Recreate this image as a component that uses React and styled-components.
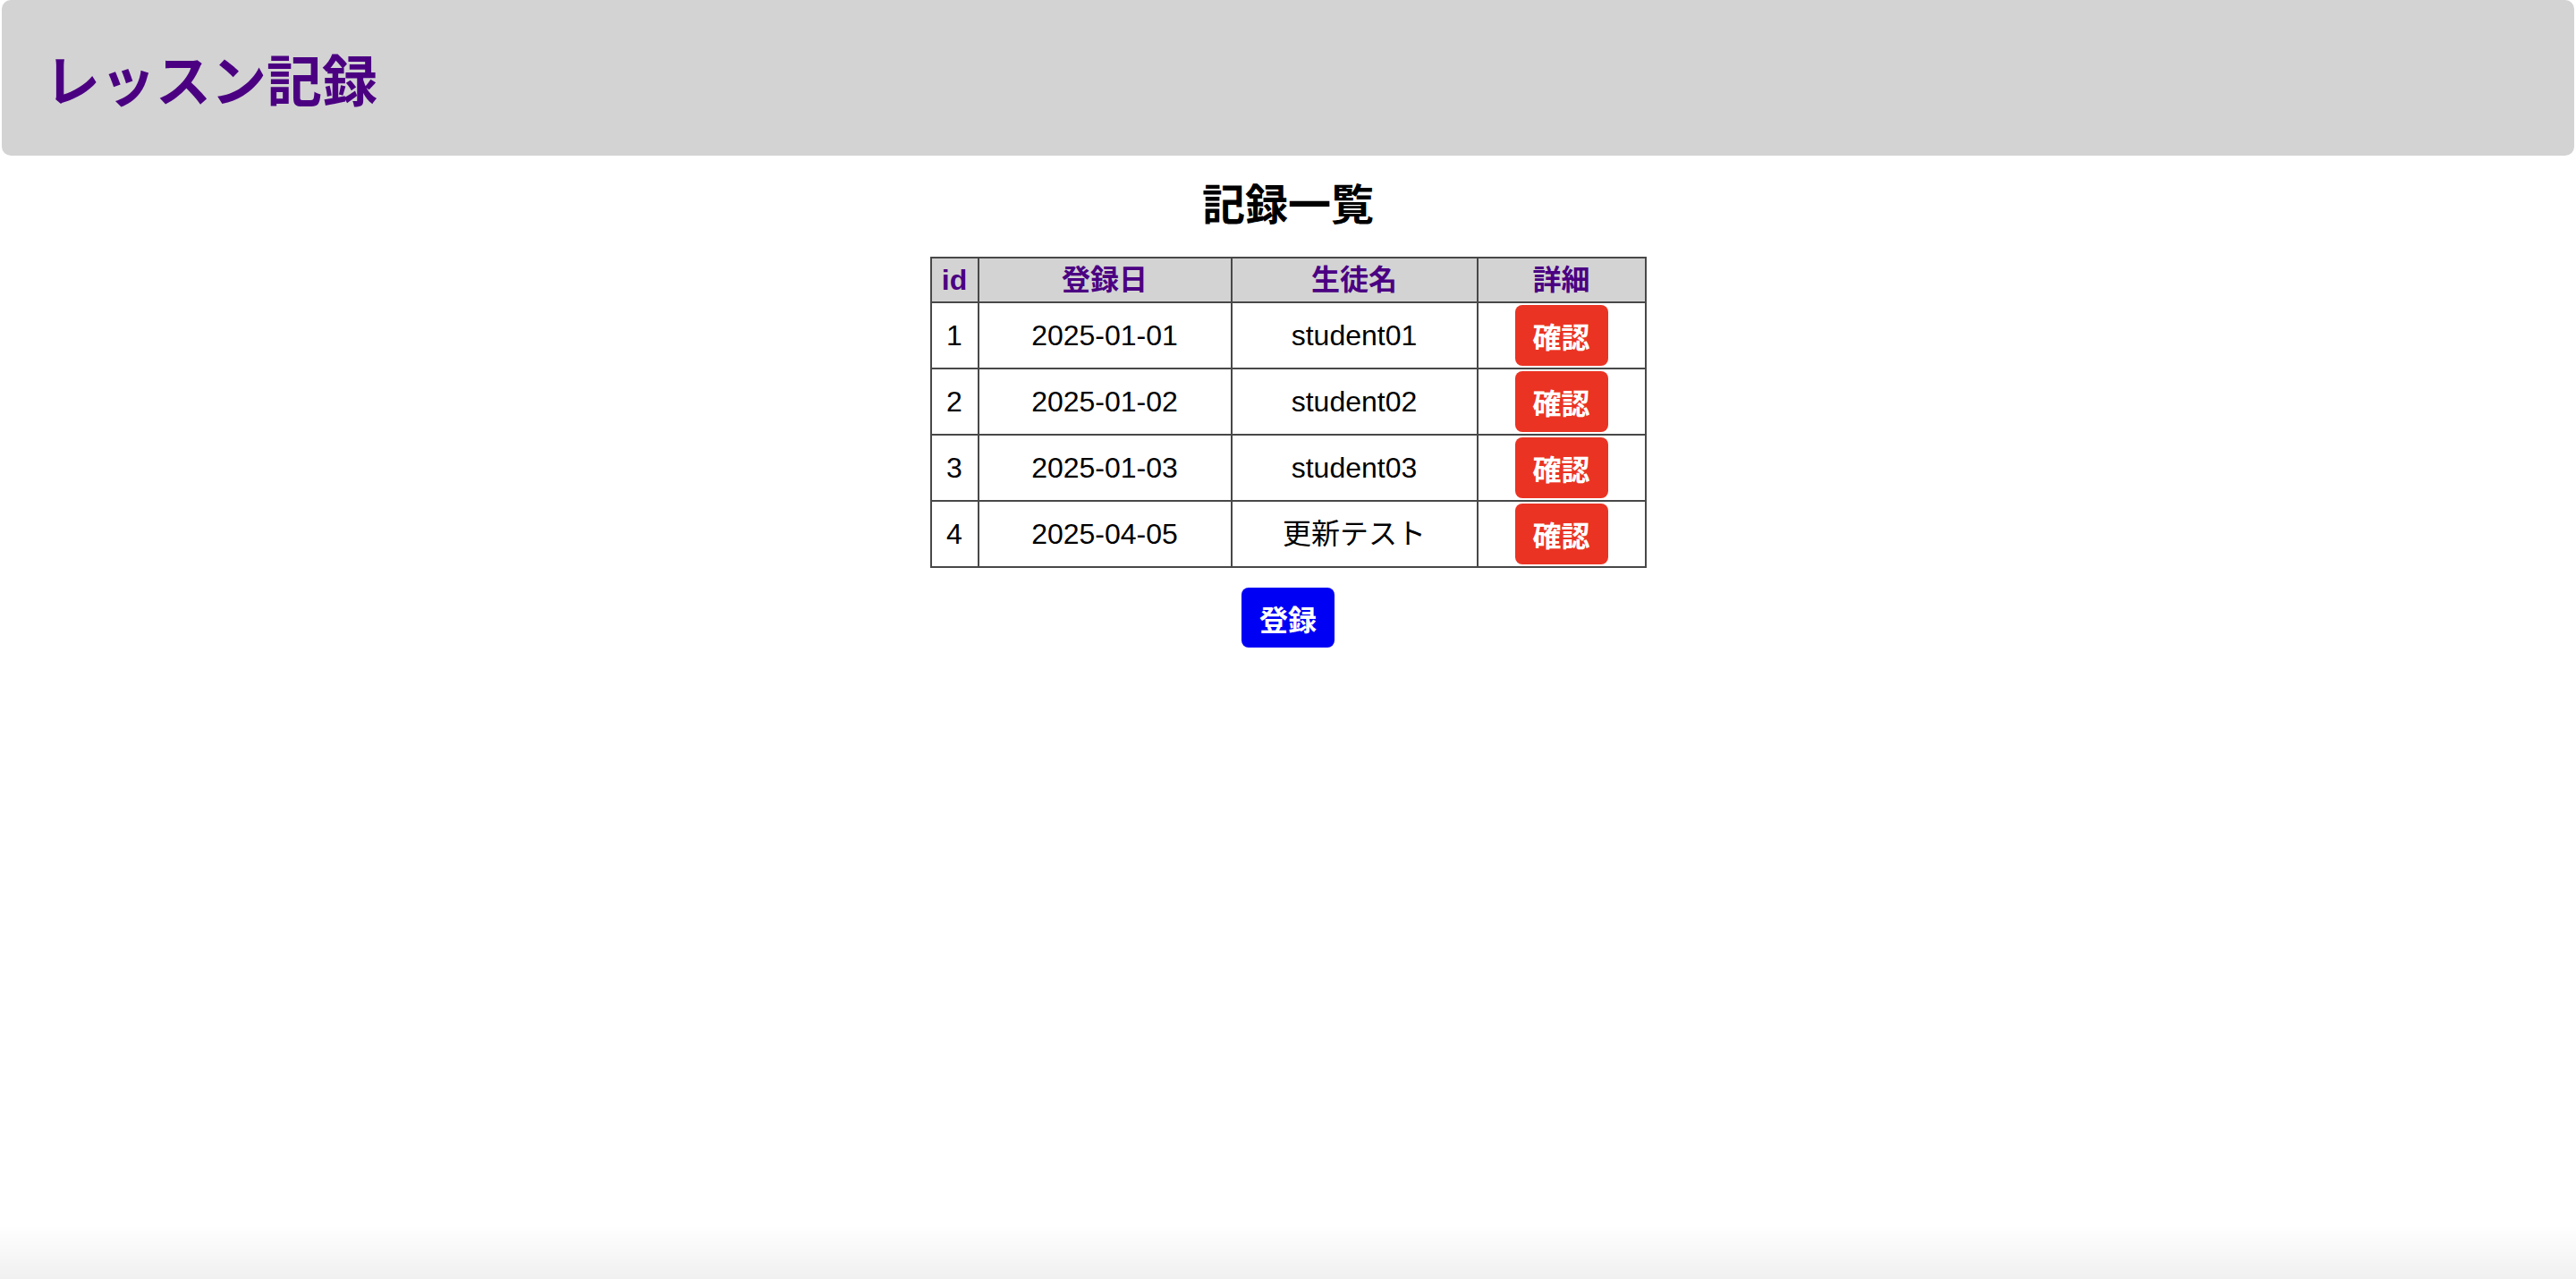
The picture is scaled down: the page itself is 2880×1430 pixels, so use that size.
import React from "react";
import styled, { createGlobalStyle } from "styled-components";

const records = [
  { id: 1, date: "2025-01-01", name: "student01" },
  { id: 2, date: "2025-01-02", name: "student02" },
  { id: 3, date: "2025-01-03", name: "student03" },
  { id: 4, date: "2025-04-05", name: "更新テスト" },
];

function App() {
  return (
    <>
      <GlobalStyle />
      <Header>
        <Title>レッスン記録</Title>
      </Header>
      <Main>
        <Heading>記録一覧</Heading>
        <Table>
          <colgroup>
            <Col width="53px" />
            <Col width="283px" />
            <Col width="275px" />
            <Col width="188px" />
          </colgroup>
          <thead>
            <tr>
              <Th>id</Th>
              <Th>登録日</Th>
              <Th>生徒名</Th>
              <Th>詳細</Th>
            </tr>
          </thead>
          <tbody>
            {records.map((r) => (
              <tr key={r.id}>
                <Td>{r.id}</Td>
                <Td>{r.date}</Td>
                <Td>{r.name}</Td>
                <Td>
                  <Button color="#ea3323" height="68px">
                    確認
                  </Button>
                </Td>
              </tr>
            ))}
          </tbody>
        </Table>
        <Button color="#0000f5" height="67px" top="22px">
          登録
        </Button>
      </Main>
      <BottomShade />
    </>
  );
}

export default App;

const GlobalStyle = createGlobalStyle`
  html, body {
    margin: 0;
    background: #ffffff;
  }
  body {
    font-family: "Liberation Sans", "Noto Sans CJK JP", sans-serif;
    min-height: 1430px;
  }
`;

const Header = styled.header`
  height: 174px;
  margin: 0 2px;
  background-color: #d3d3d3;
  border-radius: 10px;
  display: flex;
  align-items: center;
  padding-left: 48px;
  box-sizing: border-box;
`;

const Title = styled.h1`
  margin: 0;
  font-size: 62px;
  font-weight: 700;
  color: #4b0082;
`;

const Main = styled.main`
  display: flex;
  flex-direction: column;
  align-items: center;
  padding-top: 27px;
`;

const Heading = styled.h2`
  margin: 0 0 28px;
  font-size: 48px;
  line-height: 58px;
  font-weight: 700;
  color: #000;
`;

const Table = styled.table`
  width: 799px;
  border-collapse: collapse;
  table-layout: fixed;
  border: 2px solid #484848;
  font-size: 32px;
  color: #000;
`;

const Col = styled.col`
  width: ${(p) => p.width};
`;

const Th = styled.th`
  border: 2px solid #484848;
  background-color: #d3d3d3;
  color: #4b0082;
  font-weight: 700;
  padding: 2px 0;
  line-height: 44px;
  text-align: center;
`;

const Td = styled.td`
  border: 2px solid #484848;
  padding: 2px 0;
  text-align: center;
  vertical-align: middle;
  line-height: 40px;
`;

const Button = styled.button`
  display: inline-flex;
  align-items: center;
  justify-content: center;
  width: 104px;
  height: ${(p) => p.height};
  margin-top: ${(p) => p.top || "0"};
  padding: 0;
  border: none;
  border-radius: 8px;
  background-color: ${(p) => p.color};
  color: #fff;
  font-family: "Liberation Sans", "Noto Sans CJK JP", sans-serif;
  font-size: 32px;
  font-weight: 700;
  vertical-align: middle;
  cursor: pointer;
`;

const BottomShade = styled.div`
  position: fixed;
  left: 0;
  right: 0;
  bottom: 0;
  height: 60px;
  pointer-events: none;
  background: linear-gradient(
    to bottom,
    rgba(0, 0, 0, 0),
    rgba(0, 0, 0, 0.06)
  );
`;
